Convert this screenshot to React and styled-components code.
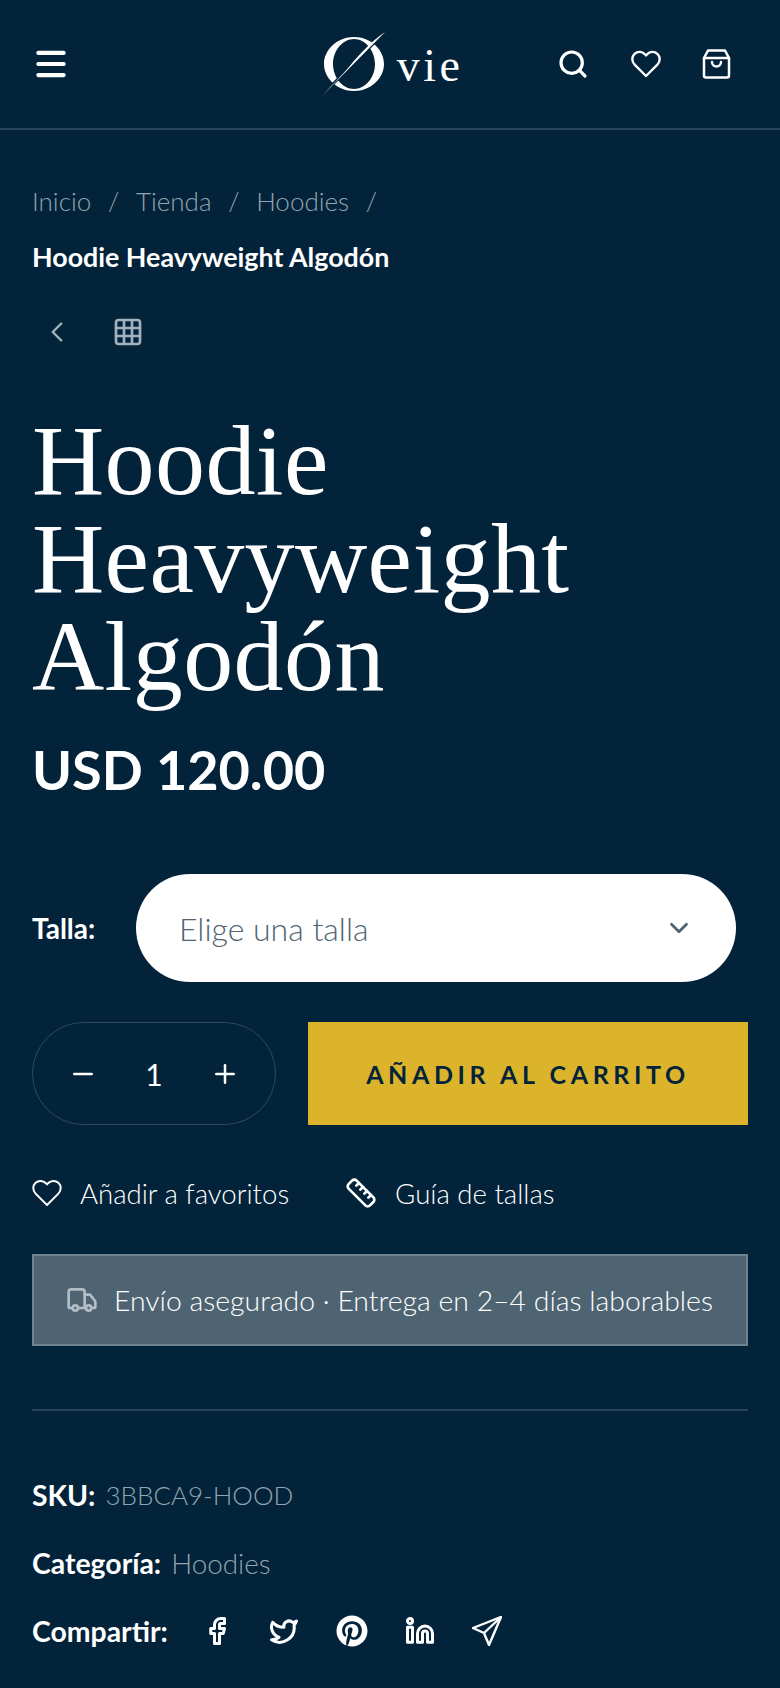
import React from 'react';
import styled, { createGlobalStyle } from 'styled-components';
import { Menu, Search, ChevronLeft, ChevronDown, Grid3x3, Minus, Plus, Ruler, Truck, Facebook, Twitter, Linkedin } from 'lucide-react';
import { FaPinterest } from 'react-icons/fa';

const GlobalStyle = createGlobalStyle`
  html, body { margin: 0; padding: 0; background: #02233a; }
  body { font-family: "Lato", "Open Sans", sans-serif; color: #fff; }
  * { box-sizing: border-box; }
`;

const Page = styled.div`
  width: 780px;
  height: 1688px;
  overflow: hidden;
  background: #02233a;
`;

const Header = styled.header`
  height: 130px;
  border-bottom: 2px solid #2a4559;
  display: grid;
  grid-template-columns: 1fr auto 1fr;
  align-items: center;
  padding: 0 32px;
`;

const HeaderActions = styled.div`
  display: flex;
  justify-content: flex-end;
  align-items: center;
  gap: 41.5px;
  padding-right: 17px;
`;

const LogoWrap = styled.div`
  display: flex;
  align-items: center;
  gap: 11px;
  margin-left: 5px;
`;

const LogoText = styled.span`
  font-family: "Liberation Serif", serif;
  font-size: 46px;
  letter-spacing: 3.5px;
  line-height: 1;
  margin-top: 4px;
`;

const Main = styled.main`
  padding: 0 32px;
`;

const Crumbs = styled.nav`
  padding-top: 53px;
  font-size: 26px;
  font-weight: 300;
  line-height: 36px;
  color: #94a4af;
  display: flex;
  gap: 16.7px;
`;

const CrumbCurrent = styled.div`
  margin-top: 20px;
  font-size: 26.8px;
  font-weight: 700;
  line-height: 36px;
  color: #fff;
`;

const NavIcons = styled.div`
  display: flex;
  align-items: center;
  gap: 38px;
  padding: 38px 0 0 8px;
  color: #a3b1bb;
  height: 76px;
`;

const Title = styled.h1`
  margin: 61px 0 0;
  font-family: "Liberation Serif", serif;
  font-weight: 400;
  font-size: 100px;
  line-height: 98px;
  letter-spacing: 0.4px;
`;

const Price = styled.div`
  margin-top: 28px;
  font-size: 54px;
  font-weight: 700;
  line-height: 72px;
`;

const SizeRow = styled.div`
  margin-top: 68px;
  display: flex;
  align-items: center;
  gap: 40px;
`;

const SizeLabel = styled.span`
  font-size: 28px;
  font-weight: 700;
  width: 64px;
`;

const SizeSelect = styled.div`
  width: 600px;
  height: 108px;
  border-radius: 54px;
  background: #fff;
  color: #4e6373;
  font-size: 32px;
  font-weight: 300;
  display: flex;
  align-items: center;
  justify-content: space-between;
  padding: 0 42px 0 43px;
`;

const BuyRow = styled.div`
  margin-top: 40px;
  display: flex;
  gap: 32px;
`;

const Qty = styled.div`
  width: 244px;
  height: 103px;
  border: 1px solid #2f4a5d;
  border-radius: 52px;
  display: flex;
  align-items: center;
  justify-content: space-between;
  padding: 0 35px;
  font-size: 30px;
`;

const AddButton = styled.div`
  width: 440px;
  height: 103px;
  background: #dbb42c;
  color: #02233a;
  font-size: 25px;
  font-weight: 700;
  letter-spacing: 4.6px;
  display: flex;
  align-items: center;
  justify-content: center;
`;

const Links = styled.div`
  margin-top: 50px;
  display: flex;
  gap: 56px;
  height: 36px;
`;

const LinkItem = styled.div`
  display: flex;
  align-items: center;
  gap: 18px;
  font-size: 27.6px;
  font-weight: 300;
`;

const Banner = styled.div`
  margin-top: 43px;
  height: 92px;
  background: #4f6472;
  border: 2px solid #6e828f;
  display: flex;
  align-items: center;
  gap: 16px;
  padding-left: 32px;
  font-size: 28.4px;
  font-weight: 300;
  white-space: nowrap;
  color: #fff;
  svg { color: #b2bdc5; flex: none; }
`;

const Divider = styled.hr`
  margin: 63px 0 0;
  border: 0;
  height: 2px;
  background: #2a4559;
`;

const MetaRow = styled.div`
  margin-top: ${p => p.$top}px;
  display: flex;
  align-items: center;
  height: 36px;
  gap: 10px;
`;

const MetaLabel = styled.strong`
  font-size: 28.4px;
  font-weight: 700;
  color: #fff;
`;

const MetaValue = styled.span`
  font-size: ${p => p.$size}px;
  font-weight: 300;
  color: #94a4af;
`;

const ShareIcons = styled.div`
  display: flex;
  align-items: center;
  gap: 37px;
  margin-left: 24px;
  color: #fff;
`;

const Logo = () => (
  <LogoWrap>
    <svg width="64" height="64" viewBox="0 0 64 64" aria-hidden="true">
      <path
        fill="#fff"
        fillRule="evenodd"
        d="M32 5C15 5 2 18 2 32s13 27 30 27 30-13 30-27S49 5 32 5Zm0 2c11 0 21 11 21 25s-10 25-21 25-21-11-21-25S21 7 32 7Z"
      />
      <path fill="#02233a" d="M60 5 5 60l-2-2L58 3Z" />
      <path fill="#fff" d="M63 0 1 63C11 52 20 43 27 35 38 21 50 9 63 0Z" />
    </svg>
    <LogoText>vie</LogoText>
  </LogoWrap>
);

const HeartIcon = ({ stroke = 2.2 }) => (
  <svg width="30" height="28" viewBox="0 0 30 28" fill="none" stroke="#fff" strokeWidth={stroke} strokeLinejoin="round">
    <path d="M15 26 3.600 14.600C.5 11.500.6 6.600 3.600 3.800 6.700 1 11.600 1.300 14.400 4.700l.6.7.6-.7c2.800-3.400 7.700-3.700 10.800-.9 3 2.800 3.100 7.700 0 10.800Z" />
  </svg>
);

const BagIcon = () => (
  <svg width="29" height="30" viewBox="0 0 29 30" fill="none" stroke="#fff" strokeWidth="2.500" strokeLinejoin="round" strokeLinecap="round">
    <path d="M2 9h25v17.500a2 2 0 0 1-2 2H4a2 2 0 0 1-2-2V9Z" />
    <path d="M2 9l4-7.500h17l4 7.500" />
    <path d="M10 13c0 6 9 6 9 0" />
  </svg>
);

const PlaneIcon = () => (
  <svg width="30" height="30" viewBox="0 0 30 30" fill="none" stroke="#fff" strokeWidth="2.400" strokeLinejoin="round">
    <path d="M29 1 1 12l11 5 5 12L29 1Z" />
    <path d="M29 1 12 17" />
  </svg>
);

export default function App() {
  return (
    <Page>
      <GlobalStyle />
      <Header>
        <Menu size={38} strokeWidth={2.6} />
        <Logo />
        <HeaderActions>
          <Search size={32} strokeWidth={2.4} />
          <HeartIcon stroke={2.4} />
          <BagIcon />
        </HeaderActions>
      </Header>
      <Main>
        <Crumbs>
          <span>Inicio</span><span>/</span><span>Tienda</span><span>/</span><span>Hoodies</span><span>/</span>
        </Crumbs>
        <CrumbCurrent>Hoodie Heavyweight Algodón</CrumbCurrent>
        <NavIcons>
          <ChevronLeft size={34} strokeWidth={1.7} />
          <Grid3x3 size={32} strokeWidth={2} />
        </NavIcons>
        <Title>Hoodie<br />Heavyweight<br />Algodón</Title>
        <Price>USD 120.00</Price>
        <SizeRow>
          <SizeLabel>Talla:</SizeLabel>
          <SizeSelect>
            <span>Elige una talla</span>
            <ChevronDown size={30} strokeWidth={2.2} />
          </SizeSelect>
        </SizeRow>
        <BuyRow>
          <Qty>
            <Minus size={30} strokeWidth={2} />
            <span>1</span>
            <Plus size={30} strokeWidth={2} />
          </Qty>
          <AddButton>AÑADIR AL CARRITO</AddButton>
        </BuyRow>
        <Links>
          <LinkItem><HeartIcon stroke={2} />Añadir a favoritos</LinkItem>
          <LinkItem><Ruler size={32} strokeWidth={2} />Guía de tallas</LinkItem>
        </Links>
        <Banner><Truck size={32} strokeWidth={2} />Envío asegurado · Entrega en 2–4 días laborables</Banner>
        <Divider />
        <MetaRow $top={66}><MetaLabel>SKU:</MetaLabel><MetaValue $size={26}>3BBCA9-HOOD</MetaValue></MetaRow>
        <MetaRow $top={32}><MetaLabel>Categoría:</MetaLabel><MetaValue $size={27.8}>Hoodies</MetaValue></MetaRow>
        <MetaRow $top={32}>
          <MetaLabel>Compartir:</MetaLabel>
          <ShareIcons>
            <Facebook size={30} strokeWidth={2.4} />
            <Twitter size={30} strokeWidth={2.4} />
            <FaPinterest size={32} />
            <Linkedin size={30} strokeWidth={2.4} />
            <PlaneIcon />
          </ShareIcons>
        </MetaRow>
      </Main>
    </Page>
  );
}
